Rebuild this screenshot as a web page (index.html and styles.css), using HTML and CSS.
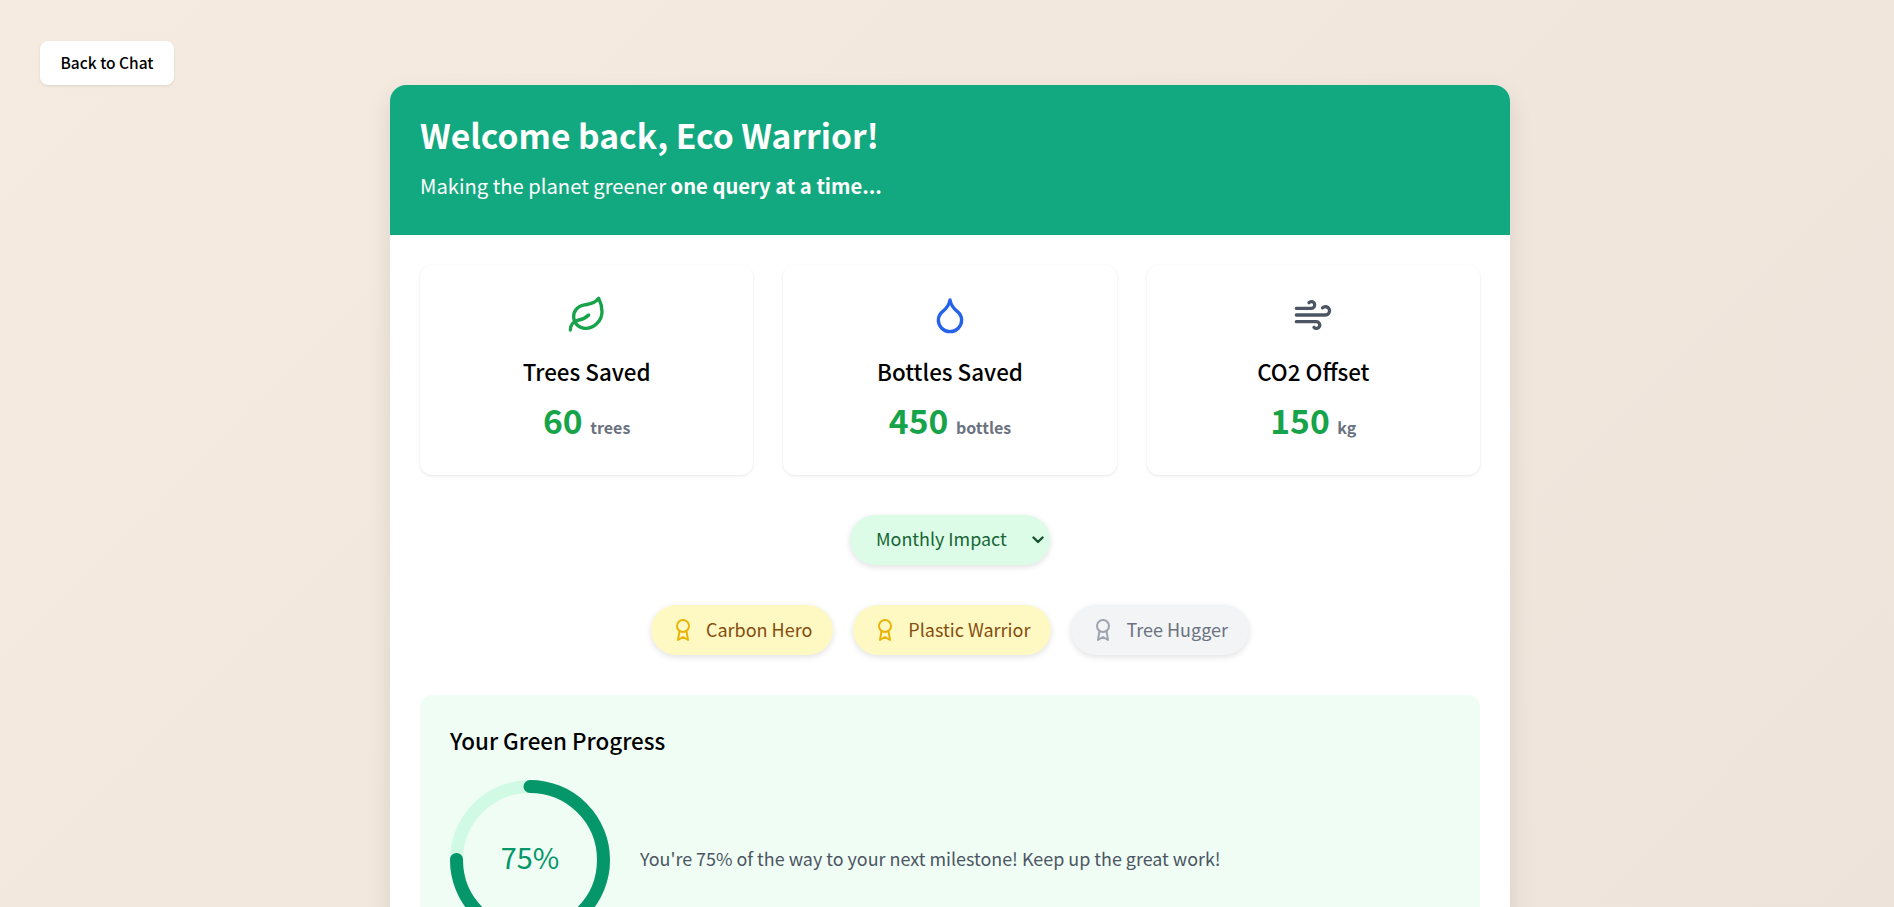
FILE: index.html
```html
<!DOCTYPE html>
<html lang="en">
<head>
    <meta charset="UTF-8">
    <meta name="viewport" content="width=device-width, initial-scale=1.0">
    <title>Eco Dashboard</title>
    <link rel="stylesheet" href="styles.css">
</head>
<body>
    <div class="top-bar">
        <button class="back-btn" type="button">Back to Chat</button>
    </div>

    <div class="dashboard">
        <header class="dash-header">
            <h1>Welcome back, Eco Warrior!</h1>
            <p>Making the planet greener <strong>one query at a time...</strong></p>
        </header>

        <div class="dash-body">
            <div class="stats">
                <div class="stat-card">
                    <svg class="stat-icon icon-green" viewBox="0 0 24 24">
                        <path d="M11 20A7 7 0 0 1 9.8 6.1C15.5 5 17 4.48 19 2c1 2 2 4.18 2 8 0 5.5-4.78 10-10 10Z"/>
                        <path d="M2 21c0-3 1.85-5.36 5.08-6C9.5 14.52 12 13 13 12"/>
                    </svg>
                    <h3>Trees Saved</h3>
                    <div class="stat-value">60 <span>trees</span></div>
                </div>
                <div class="stat-card">
                    <svg class="stat-icon icon-blue" viewBox="0 0 24 24">
                        <path d="M12 22a7 7 0 0 0 7-7c0-2-1-3.9-3-5.5s-3.5-4-4-6.5c-.5 2.5-2 4.9-4 6.5C6 11.1 5 13 5 15a7 7 0 0 0 7 7z"/>
                    </svg>
                    <h3>Bottles Saved</h3>
                    <div class="stat-value">450 <span>bottles</span></div>
                </div>
                <div class="stat-card">
                    <svg class="stat-icon icon-gray" viewBox="0 0 24 24">
                        <path d="M17.7 7.7a2.5 2.5 0 1 1 1.8 4.3H2"/>
                        <path d="M9.6 4.6A2 2 0 1 1 11 8H2"/>
                        <path d="M12.6 19.4A2 2 0 1 0 14 16H2"/>
                    </svg>
                    <h3>CO2 Offset</h3>
                    <div class="stat-value">150 <span>kg</span></div>
                </div>
            </div>

            <div class="period">
                <div class="period-wrap">
                    <select class="period-select">
                        <option>Monthly Impact</option>
                        <option>Yearly Impact</option>
                    </select>
                    <svg class="period-arrow" viewBox="0 0 12 8"><path d="M1.5 1.5 6 6l4.5-4.5"/></svg>
                </div>
            </div>

            <div class="badges">
                <div class="badge badge-gold">
                    <svg viewBox="0 0 24 24"><circle cx="12" cy="8" r="6"/><path d="M15.477 12.89 17 22l-5-3-5 3 1.523-9.11"/></svg>
                    Carbon Hero
                </div>
                <div class="badge badge-gold">
                    <svg viewBox="0 0 24 24"><circle cx="12" cy="8" r="6"/><path d="M15.477 12.89 17 22l-5-3-5 3 1.523-9.11"/></svg>
                    Plastic Warrior
                </div>
                <div class="badge badge-off">
                    <svg viewBox="0 0 24 24"><circle cx="12" cy="8" r="6"/><path d="M15.477 12.89 17 22l-5-3-5 3 1.523-9.11"/></svg>
                    Tree Hugger
                </div>
            </div>

            <section class="progress">
                <h2>Your Green Progress</h2>
                <div class="progress-row">
                    <div class="ring">
                        <svg viewBox="0 0 160 160">
                            <circle class="ring-track" cx="80" cy="80" r="73.5"/>
                            <circle class="ring-fill" cx="80" cy="80" r="73.5"/>
                        </svg>
                        <span class="ring-label">75%</span>
                    </div>
                    <p>You're 75% of the way to your next milestone! Keep up the great work!</p>
                </div>
            </section>
        </div>
    </div>
</body>
</html>
```

FILE: styles.css
```css
* {
    margin: 0;
    padding: 0;
    box-sizing: border-box;
}

body {
    font-family: "Noto Sans CJK SC", "Noto Sans", sans-serif;
    background: linear-gradient(135deg, #f5ebe0, #eee3da);
    color: #000;
    padding: 41px 40px 40px;
    min-height: 100vh;
}

.top-bar {
    display: flex;
}

.back-btn {
    width: 134px;
    height: 44px;
    padding-bottom: 2px;
    background: #fff;
    border: none;
    border-radius: 8px;
    box-shadow: 0 1px 3px rgba(0, 0, 0, 0.1);
    font-family: inherit;
    font-size: 15.5px;
    font-weight: 500;
    color: #000;
    cursor: pointer;
}

.dashboard {
    width: 1120px;
    margin-left: 350px;
    background: #fff;
    border-radius: 16px;
    overflow: hidden;
    box-shadow: 0 10px 25px rgba(0, 0, 0, 0.1);
}

.dash-header {
    height: 150px;
    padding: 30px;
    background: #13a980;
    color: #fff;
}

.dash-header h1 {
    font-size: 33.6px;
    font-weight: 700;
    line-height: 40px;
    margin-bottom: 16px;
}

.dash-header p {
    font-size: 20.2px;
    line-height: 30px;
}

.dash-body {
    padding: 30px;
}

.stats {
    display: grid;
    grid-template-columns: repeat(3, 1fr);
    gap: 30px;
}

.stat-card {
    height: 210px;
    padding: 30px;
    background: #fff;
    border-radius: 12px;
    box-shadow: 0 1px 3px rgba(0, 0, 0, 0.1);
    text-align: center;
}

.stat-icon {
    display: block;
    width: 40px;
    height: 40px;
    margin: 0 auto 20px;
    fill: none;
    stroke-width: 2;
    stroke-linecap: round;
    stroke-linejoin: round;
}

.icon-green { stroke: #16a34a; }
.icon-blue { stroke: #2563eb; }
.icon-gray { stroke: #4b5563; }

.stat-card h3 {
    font-size: 22.4px;
    font-weight: 500;
    line-height: 33px;
    margin-bottom: 10px;
}

.stat-value {
    font-size: 33.6px;
    font-weight: 700;
    line-height: 44px;
    color: #16a34a;
}

.stat-value span {
    font-size: 16px;
    color: #6b7280;
}

.period {
    display: flex;
    justify-content: center;
    margin-top: 40px;
}

.period-wrap {
    position: relative;
    width: 200px;
    height: 50px;
}

.period-select {
    display: block;
    width: 100%;
    height: 100%;
    padding: 0 30px 4px 26px;
    appearance: none;
    background: #dcfce7;
    border: none;
    border-radius: 25px;
    box-shadow: 0 2px 6px rgba(0, 0, 0, 0.12);
    font-family: inherit;
    font-size: 17.92px;
    color: #166534;
}

.period-arrow {
    position: absolute;
    right: 6px;
    top: 21px;
    width: 12px;
    height: 8px;
    fill: none;
    stroke: #14532d;
    stroke-width: 2.4;
    stroke-linecap: round;
    stroke-linejoin: round;
    pointer-events: none;
}

.badges {
    display: flex;
    justify-content: center;
    gap: 20px;
    margin-top: 40px;
}

.badge {
    display: flex;
    align-items: center;
    gap: 11px;
    height: 50px;
    padding: 0 21px 2px 20px;
    border-radius: 25px;
    box-shadow: 0 2px 6px rgba(0, 0, 0, 0.12);
    font-size: 18px;
}

.badge svg {
    width: 24px;
    height: 24px;
    margin-top: 2px;
    fill: none;
    stroke: currentColor;
    stroke-width: 2;
    stroke-linecap: round;
    stroke-linejoin: round;
}

.badge-gold {
    background: #fef9c3;
    color: #854d0e;
}

.badge-gold svg {
    stroke: #eab308;
}

.badge-off {
    background: #f3f4f6;
    color: #6b7280;
}

.badge-off svg {
    stroke: #9ca3af;
}

.progress {
    margin-top: 40px;
    padding: 29px 30px 30px;
    background: #f0fdf4;
    border-radius: 12px;
}

.progress h2 {
    font-size: 22.4px;
    font-weight: 500;
    line-height: 33px;
    margin-bottom: 23px;
}

.progress-row {
    display: flex;
    align-items: center;
    gap: 30px;
}

.progress-row p {
    padding-bottom: 4px;
    font-size: 17.92px;
    color: #4b5563;
}

.ring {
    position: relative;
    width: 160px;
    height: 160px;
    flex-shrink: 0;
}

.ring svg {
    display: block;
    width: 160px;
    height: 160px;
    fill: none;
    stroke-width: 13;
}

.ring-track {
    stroke: #d1fae5;
}

.ring-fill {
    stroke: #059669;
    stroke-linecap: round;
    stroke-dasharray: 346.4 462;
    transform: rotate(-90deg);
    transform-origin: center;
}

.ring-label {
    position: absolute;
    inset: 0 0 8px;
    display: flex;
    align-items: center;
    justify-content: center;
    font-size: 28.8px;
    color: #059669;
}
```
